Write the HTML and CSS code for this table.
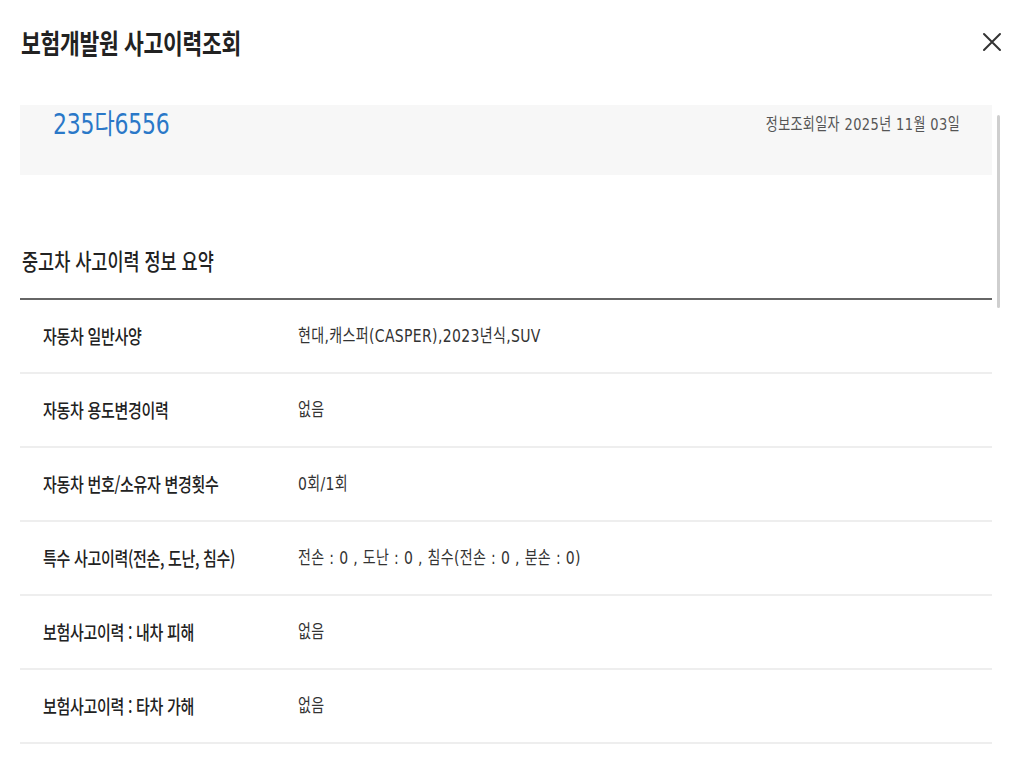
FILE: index.html
```html
<!DOCTYPE html>
<html lang="ko">
<head>
<meta charset="utf-8">
<title>보험개발원 사고이력조회</title>
<link rel="stylesheet" href="styles.css">
</head>
<body>
<div class="modal">
  <header class="modal-header">
    <h1 class="title"><span class="tx">보험개발원 사고이력조회</span></h1>
    <button class="close" aria-label="닫기">
      <svg width="20" height="20" viewBox="0 0 20 20"><path d="M2 2 L18 18 M18 2 L2 18" stroke="#333" stroke-width="2" fill="none" stroke-linecap="round"/></svg>
    </button>
  </header>
  <div class="scroll">
    <div class="thumb"></div>
    <div class="plate-box">
      <span class="plate tx">235다6556</span>
      <span class="date tx">정보조회일자 2025년 11월 03일</span>
    </div>
    <div class="section-head"><h2 class="tx">중고차 사고이력 정보 요약</h2></div>
    <div class="table">
      <div class="row"><div class="label"><span class="tx">자동차 일반사양</span></div><div class="value"><span class="tx">현대,캐스퍼(CASPER),2023년식,SUV</span></div></div>
      <div class="row"><div class="label"><span class="tx">자동차 용도변경이력</span></div><div class="value"><span class="tx">없음</span></div></div>
      <div class="row"><div class="label"><span class="tx">자동차 번호/소유자 변경횟수</span></div><div class="value"><span class="tx">0회/1회</span></div></div>
      <div class="row"><div class="label"><span class="tx">특수 사고이력(전손, 도난, 침수)</span></div><div class="value"><span class="tx">전손 : 0 , 도난 : 0 , 침수(전손 : 0 , 분손 : 0)</span></div></div>
      <div class="row"><div class="label"><span class="tx">보험사고이력 : 내차 피해</span></div><div class="value"><span class="tx">없음</span></div></div>
      <div class="row"><div class="label"><span class="tx">보험사고이력 : 타차 가해</span></div><div class="value"><span class="tx">없음</span></div></div>
    </div>
  </div>
</div>
</body>
</html>
```

FILE: styles.css
```css
* { box-sizing: border-box; }
html, body { margin: 0; padding: 0; background: #fff; }
body {
  font-family: "DejaVu Sans", "Noto Sans CJK KR", sans-serif;
  color: #222;
  width: 1024px;
  height: 768px;
  overflow: hidden;
}
.tx {
  display: inline-block;
  transform: scaleY(1.28);
}
.modal { position: relative; }
.modal-header {
  height: 84px;
  display: flex;
  align-items: center;
  justify-content: space-between;
  padding: 0 22px 0 21px;
}
.title {
  margin: 0;
  font-family: "Noto Sans CJK KR", sans-serif;
  font-size: 21.5px;
  font-weight: 700;
  color: #222;
  letter-spacing: -0.3px;
  line-height: 30px;
}
.close {
  border: 0;
  background: none;
  padding: 0;
  width: 20px;
  height: 20px;
  display: flex;
}
.scroll {
  position: relative;
  margin-top: 21px;
  padding: 0 32px 0 20px;
}
.thumb {
  position: absolute;
  left: 997px;
  top: 10px;
  width: 3px;
  height: 193px;
  border-radius: 2px;
  background: #cfcfcf;
}
.plate-box {
  height: 70px;
  background: #f7f7f7;
  display: flex;
  justify-content: space-between;
  align-items: flex-start;
  padding: 3px 32px 0 33px;
}
.plate {
  font-size: 22px;
  color: #2a78c8;
  line-height: 34px;
  letter-spacing: -0.2px;
}
.date {
  font-size: 13px;
  color: #555;
  line-height: 34px;
  letter-spacing: 0.4px;
}
.section-head {
  height: 123px;
  display: flex;
  align-items: flex-end;
  padding: 0 0 25px 2px;
}
.section-head h2 {
  margin: 0;
  font-family: "Noto Sans CJK KR", sans-serif;
  font-size: 17.5px;
  font-weight: 500;
  color: #222;
  line-height: 24px;
}
.table { border-top: 2px solid #666; }
.row {
  display: grid;
  grid-template-columns: 278px 1fr;
  align-items: center;
  height: 74px;
  border-bottom: 2px solid #eeeeee;
  font-size: 14px;
  line-height: 20px;
}
.label {
  padding-left: 23px;
  font-size: 15px;
  font-weight: 500;
  color: #222;
  letter-spacing: -0.3px;
}
.label .tx {
  font-family: "Noto Sans CJK KR", sans-serif;
}
.value {
  color: #333;
  letter-spacing: 0.35px;
}
```
